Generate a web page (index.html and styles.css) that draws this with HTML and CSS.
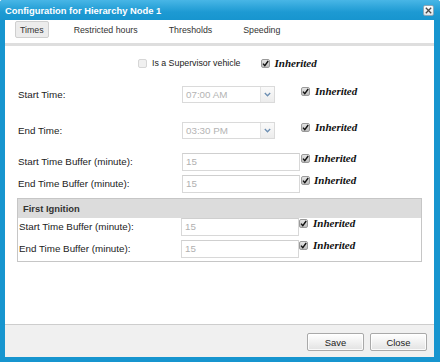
FILE: index.html
```html
<!DOCTYPE html>
<html>
<head>
<meta charset="utf-8">
<link rel="stylesheet" href="styles.css">
</head>
<body>
<div class="win">
  <div class="titlebar">
    <span class="title">Configuration for Hierarchy Node 1</span>
    <span class="xbtn"><svg width="7" height="7" viewBox="0 0 7 7"><path d="M0.8 0.8 L6.2 6.2 M6.2 0.8 L0.8 6.2" stroke="#4a4a4a" stroke-width="1.3" fill="none"/></svg></span>
  </div>
  <div class="panel">
    <div class="tabs">
      <span class="tab active">Times</span>
      <span class="tab">Restricted hours</span>
      <span class="tab">Thresholds</span>
      <span class="tab">Speeding</span>
    </div>
    <div class="band"></div>
    <div class="content">
      <div class="row sup">
        <span class="cb disabled"></span>
        <span class="sup-text">Is a Supervisor vehicle</span>
        <span class="inh sup-inh"><span class="cb checked"><svg width="7" height="7" viewBox="0 0 7 7"><path d="M1 3.6 L2.8 5.6 L6.2 1" stroke="#111" stroke-width="1.4" fill="none"/></svg></span><span class="inh-text">Inherited</span></span>
      </div>

      <div class="row combo-row first-combo">
        <span class="label">Start Time:</span>
        <span class="combo"><span class="combo-val">07:00 AM</span><span class="trigger"><svg width="7" height="5" viewBox="0 0 7 5"><path d="M0.8 1 L3.5 3.8 L6.2 1" stroke="#6d8fb3" stroke-width="1.3" fill="none"/></svg></span></span>
        <span class="inh combo-inh"><span class="cb checked"><svg width="7" height="7" viewBox="0 0 7 7"><path d="M1 3.6 L2.8 5.6 L6.2 1" stroke="#111" stroke-width="1.4" fill="none"/></svg></span><span class="inh-text">Inherited</span></span>
      </div>

      <div class="row combo-row second-combo">
        <span class="label">End Time:</span>
        <span class="combo"><span class="combo-val">03:30 PM</span><span class="trigger"><svg width="7" height="5" viewBox="0 0 7 5"><path d="M0.8 1 L3.5 3.8 L6.2 1" stroke="#6d8fb3" stroke-width="1.3" fill="none"/></svg></span></span>
        <span class="inh combo-inh"><span class="cb checked"><svg width="7" height="7" viewBox="0 0 7 7"><path d="M1 3.6 L2.8 5.6 L6.2 1" stroke="#111" stroke-width="1.4" fill="none"/></svg></span><span class="inh-text">Inherited</span></span>
      </div>

      <div class="row input-row buf1">
        <span class="label">Start Time Buffer (minute):</span>
        <span class="field">15</span>
        <span class="inh field-inh"><span class="cb checked"><svg width="7" height="7" viewBox="0 0 7 7"><path d="M1 3.6 L2.8 5.6 L6.2 1" stroke="#111" stroke-width="1.4" fill="none"/></svg></span><span class="inh-text">Inherited</span></span>
      </div>

      <div class="row input-row buf2">
        <span class="label">End Time Buffer (minute):</span>
        <span class="field">15</span>
        <span class="inh field-inh"><span class="cb checked"><svg width="7" height="7" viewBox="0 0 7 7"><path d="M1 3.6 L2.8 5.6 L6.2 1" stroke="#111" stroke-width="1.4" fill="none"/></svg></span><span class="inh-text">Inherited</span></span>
      </div>

      <div class="group">
        <div class="group-head">First Ignition</div>
        <div class="row input-row g1">
          <span class="label glabel">Start Time Buffer (minute):</span>
          <span class="field">15</span>
          <span class="inh group-inh"><span class="cb checked"><svg width="7" height="7" viewBox="0 0 7 7"><path d="M1 3.6 L2.8 5.6 L6.2 1" stroke="#111" stroke-width="1.4" fill="none"/></svg></span><span class="inh-text">Inherited</span></span>
        </div>
        <div class="row input-row g2">
          <span class="label glabel">End Time Buffer (minute):</span>
          <span class="field">15</span>
          <span class="inh group-inh"><span class="cb checked"><svg width="7" height="7" viewBox="0 0 7 7"><path d="M1 3.6 L2.8 5.6 L6.2 1" stroke="#111" stroke-width="1.4" fill="none"/></svg></span><span class="inh-text">Inherited</span></span>
        </div>
      </div>
    </div>
    <div class="footer">
      <button class="btn">Save</button>
      <button class="btn">Close</button>
    </div>
  </div>
</div>
</body>
</html>
```

FILE: styles.css
```css
html, body {
  margin: 0;
  padding: 0;
  background: #ffffff;
}
body {
  font-family: "Liberation Sans", Arial, sans-serif;
  color: #222;
}
.win {
  width: 440px;
  height: 362px;
  box-sizing: border-box;
  display: flex;
  flex-direction: column;
  background: #1795cf;
  border-radius: 3px 3px 0 0;
  overflow: hidden;
}
.titlebar {
  height: 20px;
  flex: none;
  display: flex;
  align-items: center;
  justify-content: space-between;
  padding: 0 6px 0 5px;
  background: linear-gradient(#48b6e6, #1d9ad3 60%, #1795cf);
}
.title {
  color: #fff;
  font-weight: bold;
  font-size: 9.4px;
  letter-spacing: 0;
}
.xbtn {
  width: 11px;
  height: 11px;
  box-sizing: border-box;
  border: 1px solid #8da7b8;
  border-radius: 2px;
  background: linear-gradient(#ffffff, #dfe6ea);
  display: flex;
  align-items: center;
  justify-content: center;
  margin-top: 1px;
}
.panel {
  flex: 1;
  margin: 0 6px 5px 5px;
  background: #fff;
  display: flex;
  flex-direction: column;
}
.tabs {
  height: 23px;
  flex: none;
  display: flex;
  align-items: flex-start;
  padding-left: 10px;
  gap: 19px;
}
.tab {
  margin-top: 1px;
  height: 17px;
  box-sizing: border-box;
  padding: 0 5px;
  font-size: 8.8px;
  line-height: 17px;
  color: #333;
  border: 1px solid transparent;
}
.tab.active {
  background: #ececec;
  border: 1px solid #cfcfcf;
  border-radius: 2px;
  padding: 0 4px;
}
.band {
  height: 3px;
  flex: none;
  background: #dedede;
}
.content {
  flex: 1;
  padding: 0 13px;
}
.row {
  display: flex;
  align-items: flex-start;
}
.label {
  width: 164px;
  flex: none;
  font-size: 9.8px;
  color: #222;
  white-space: nowrap;
}
.cb {
  width: 9px;
  height: 9px;
  box-sizing: border-box;
  flex: none;
  border-radius: 2px;
  display: flex;
  align-items: center;
  justify-content: center;
}
.cb.checked {
  border: 1px solid #9a9a9a;
  background: linear-gradient(#e4e4e4, #bdbdbd);
}
.cb.disabled {
  border: 1px solid #d6d6d6;
  background: #f0f0f0;
}
.inh {
  display: flex;
  align-items: flex-start;
}
.inh .cb {
  margin-top: 1px;
}
.inh-text {
  font-family: "Liberation Serif", "Times New Roman", serif;
  font-weight: bold;
  font-style: italic;
  font-size: 11px;
  line-height: 11px;
  color: #111;
  margin-left: 5px;
}

/* supervisor row */
.sup {
  margin-top: 11px;
  height: 12px;
  align-items: center;
  padding-left: 120px;
}
.sup-text {
  margin-left: 5px;
  font-size: 8.8px;
  color: #222;
  white-space: nowrap;
}
.sup-inh {
  margin-left: 20px;
  align-items: center;
}
.sup-inh .cb {
  margin-top: 0;
}
.sup-inh .inh-text {
  margin-left: 5px;
}

/* combo rows */
.combo-row {
  height: 17px;
}
.combo-row .label {
  line-height: 17px;
}
.first-combo {
  margin-top: 17px;
}
.second-combo {
  margin-top: 19px;
}
.combo {
  width: 93px;
  height: 17px;
  box-sizing: border-box;
  border: 1px solid #dadada;
  display: flex;
  flex: none;
}
.combo-val {
  flex: 1;
  font-size: 9.8px;
  line-height: 15px;
  padding-left: 3px;
  color: #b4b4b4;
}
.trigger {
  width: 13px;
  border-left: 1px solid #e2e2e2;
  background: linear-gradient(#fafafa, #ececec);
  display: flex;
  align-items: center;
  justify-content: center;
}
.combo-inh {
  margin-left: 26px;
}

/* input rows */
.input-row {
  height: 18px;
}
.input-row .label {
  line-height: 18px;
}
.buf1 {
  margin-top: 14px;
}
.buf2 {
  margin-top: 4px;
}
.field {
  width: 118px;
  height: 18px;
  box-sizing: border-box;
  flex: none;
  border: 1px solid #d8d8d8;
  border-top-color: #cfcfcf;
  font-size: 9.8px;
  line-height: 16px;
  padding-left: 3px;
  color: #b0b0b0;
}
.field-inh {
  margin-left: 1px;
}
.field-inh .inh-text {
  margin-left: 4px;
}

/* group */
.group {
  margin: 5px -1px 0 -1px;
  border: 1px solid #c6c6c6;
  padding-bottom: 3px;
}
.group-head {
  height: 19px;
  background: #dcdcdc;
  font-size: 9.4px;
  font-weight: bold;
  line-height: 19px;
  padding-left: 5px;
  color: #333;
}
.glabel {
  width: 163px;
  padding-left: 1px;
  box-sizing: content-box;
  width: 162px;
}
.g2 {
  margin-top: 4px;
}
.group-inh .inh-text {
  margin-left: 5px;
}

/* footer */
.footer {
  height: 33px;
  flex: none;
  box-sizing: border-box;
  border-top: 1px solid #cdcdcd;
  background: #f0f0f0;
  display: flex;
  justify-content: flex-end;
  align-items: flex-start;
  gap: 6px;
  padding: 8px 7px 0 0;
}
.btn {
  width: 57px;
  height: 18px;
  margin: 0;
  padding: 0;
  box-sizing: border-box;
  border: 1px solid #a9a9a9;
  border-radius: 2px;
  background: linear-gradient(#ffffff, #f1f1f1 50%, #e2e2e2);
  box-shadow: inset 0 0 0 1px rgba(255,255,255,0.8);
  font-family: "Liberation Sans", Arial, sans-serif;
  font-size: 9.4px;
  color: #222;
}
```
